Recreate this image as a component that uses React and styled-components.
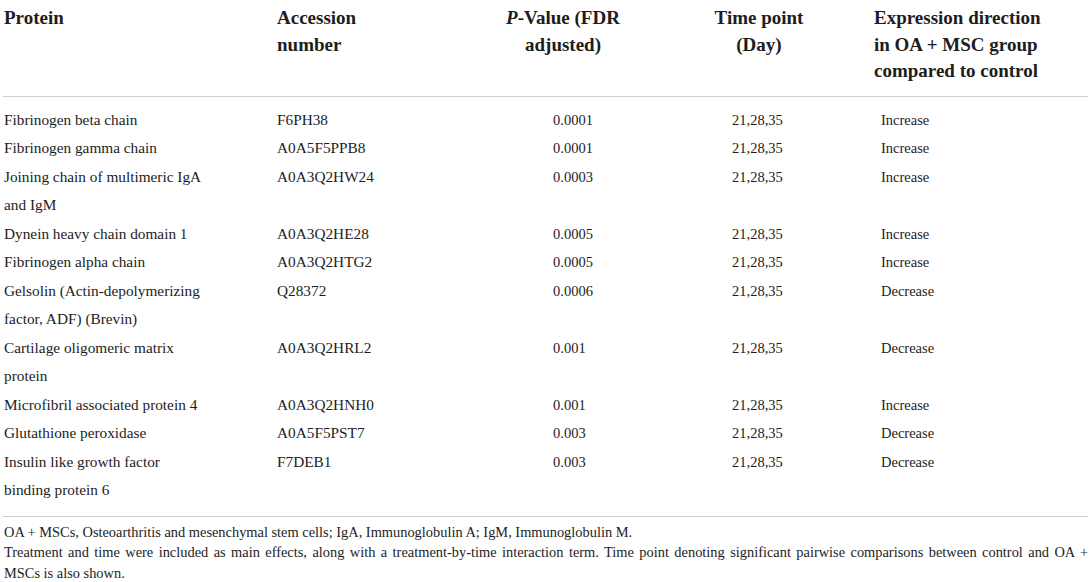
import React from "react";
import styled, { createGlobalStyle } from "styled-components";

const GlobalStyle = createGlobalStyle`
  body {
    margin: 0;
    background: #fff;
    color: #1d1d1d;
    font-family: "Liberation Serif", "Times New Roman", serif;
  }
`;

const rows = [
  ["Fibrinogen beta chain", "F6PH38", "0.0001", "Increase"],
  ["Fibrinogen gamma chain", "A0A5F5PPB8", "0.0001", "Increase"],
  ["Joining chain of multimeric IgA\nand IgM", "A0A3Q2HW24", "0.0003", "Increase"],
  ["Dynein heavy chain domain 1", "A0A3Q2HE28", "0.0005", "Increase"],
  ["Fibrinogen alpha chain", "A0A3Q2HTG2", "0.0005", "Increase"],
  ["Gelsolin (Actin-depolymerizing\nfactor, ADF) (Brevin)", "Q28372", "0.0006", "Decrease"],
  ["Cartilage oligomeric matrix\nprotein", "A0A3Q2HRL2", "0.001", "Decrease"],
  ["Microfibril associated protein 4", "A0A3Q2HNH0", "0.001", "Increase"],
  ["Glutathione peroxidase", "A0A5F5PST7", "0.003", "Decrease"],
  ["Insulin like growth factor\nbinding protein 6", "F7DEB1", "0.003", "Decrease"],
];

const App = () => {
  return (
    <>
      <GlobalStyle />
      <Wrapper>
        <Table>
          <colgroup>
            <col style={{ width: 270 }} />
            <col style={{ width: 227 }} />
            <col style={{ width: 126 }} />
            <col style={{ width: 248 }} />
            <col />
          </colgroup>
          <thead>
            <tr>
              <Head $pl={1}>Protein</Head>
              <Head $pl={4}>{"Accession\nnumber"}</Head>
              <Head $center>
                <i>P</i>-Value (FDR{"\n"}adjusted)
              </Head>
              <Head $center $pl={18}>{"Time point\n(Day)"}</Head>
              <Head>{"Expression direction\nin OA + MSC group\ncompared to control"}</Head>
            </tr>
          </thead>
          <tbody>
            {rows.map((r, i) => (
              <Row key={i} $first={i === 0} $last={i === rows.length - 1}>
                <Cell $pl={1}>{r[0]}</Cell>
                <Cell $pl={4}>{r[1]}</Cell>
                <Cell $pl={53} $small>{r[2]}</Cell>
                <Cell $pl={106} $small>21,28,35</Cell>
                <Cell $pl={7} $small>{r[3]}</Cell>
              </Row>
            ))}
          </tbody>
        </Table>
        <Notes>
          <NoteLine>
            OA + MSCs, Osteoarthritis and mesenchymal stem cells; IgA, Immunoglobulin A; IgM,
            Immunoglobulin M.
          </NoteLine>
          <NoteLine $justify>
            Treatment and time were included as main effects, along with a treatment-by-time
            interaction term. Time point denoting significant pairwise comparisons between control
            and OA +
          </NoteLine>
          <NoteLine>MSCs is also shown.</NoteLine>
        </Notes>
      </Wrapper>
    </>
  );
};

const Wrapper = styled.div`
  width: 1085px;
  padding: 0 3px;
`;

const Table = styled.table`
  width: 100%;
  table-layout: fixed;
  border-collapse: collapse;
  border-bottom: 1.5px solid #cfcfcf;
`;

const Head = styled.th`
  padding: 5px 0 11px ${(p) => p.$pl || 0}px;
  border-bottom: 1.5px solid #cfcfcf;
  text-align: ${(p) => (p.$center ? "center" : "left")};
  vertical-align: top;
  white-space: pre-line;
  font-size: 19px;
  font-weight: bold;
  line-height: 26.5px;
  i {
    font-style: italic;
  }
`;

const Row = styled.tr`
  td {
    padding-top: ${(p) => (p.$first ? 9 : 0)}px;
    padding-bottom: ${(p) => (p.$last ? 11 : 0)}px;
  }
`;

const Cell = styled.td`
  padding-left: ${(p) => p.$pl || 0}px;
  vertical-align: top;
  white-space: pre-line;
  font-size: ${(p) => (p.$small ? "14.5px" : "15.3px")};
  line-height: 28.5px;
`;

const Notes = styled.div`
  padding: 5px 0 0 1px;
`;

const NoteLine = styled.div`
  font-size: 14.4px;
  line-height: 20.5px;
  text-align: ${(p) => (p.$justify ? "justify" : "left")};
  text-align-last: ${(p) => (p.$justify ? "justify" : "auto")};
  white-space: ${(p) => (p.$justify ? "normal" : "nowrap")};
`;

export default App;
